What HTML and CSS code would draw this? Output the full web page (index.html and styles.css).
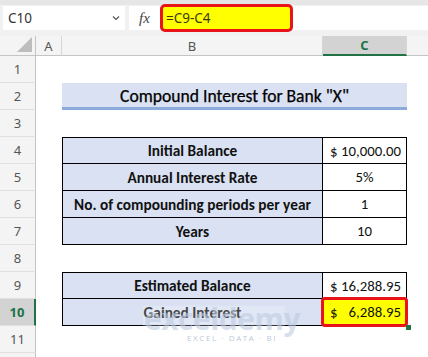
FILE: index.html
```html
<!DOCTYPE html>
<html>
<head>
<meta charset="utf-8">
<link rel="stylesheet" href="styles.css">
</head>
<body>
<div class="app">
  <div class="topbar">
    <div class="namebox">
      <span>C10</span>
      <svg class="chev" width="8" height="6" viewBox="0 0 8 6"><path d="M1 1.5 L4 4.5 L7 1.5" fill="none" stroke="#555" stroke-width="1.2"/></svg>
    </div>
    <div class="fxbox"><span class="fx">fx</span></div>
    <div class="formula"><div class="formula-hl">=C9-C4</div></div>
  </div>

  <div class="sheet">
    <div class="corner"><span class="tri"></span></div>
    <div class="ch">A</div>
    <div class="ch">B</div>
    <div class="ch ch-sel">C</div>
    <div class="ch ch-last"></div>

    <div class="rh">1</div><div class="c"></div><div class="c"></div><div class="c"></div><div class="c"></div>

    <div class="rh">2</div><div class="c"></div><div class="title">Compound Interest for Bank "X"</div><div class="c"></div>

    <div class="rh">3</div><div class="c"></div><div class="c"></div><div class="c"></div><div class="c"></div>

    <div class="rh">4</div><div class="c"></div><div class="tb first">Initial Balance</div><div class="tv first acct"><span>$</span><span>10,000.00</span></div><div class="c"></div>

    <div class="rh">5</div><div class="c"></div><div class="tb">Annual Interest Rate</div><div class="tv">5%</div><div class="c"></div>

    <div class="rh">6</div><div class="c"></div><div class="tb">No. of compounding periods per year</div><div class="tv">1</div><div class="c"></div>

    <div class="rh">7</div><div class="c"></div><div class="tb">Years</div><div class="tv">10</div><div class="c"></div>

    <div class="rh">8</div><div class="c"></div><div class="c"></div><div class="c"></div><div class="c"></div>

    <div class="rh">9</div><div class="c"></div><div class="tb first">Estimated Balance</div><div class="tv first acct"><span>$</span><span>16,288.95</span></div><div class="c"></div>

    <div class="rh rh-sel">10</div><div class="c"></div><div class="tb">Gained Interest</div><div class="tv acct active"><span>$</span><span>6,288.95</span></div><div class="c"></div>

    <div class="rh">11</div><div class="c"></div><div class="c"></div><div class="c"></div><div class="c"></div>

    <div class="rh"></div><div class="c"></div><div class="c"></div><div class="c"></div><div class="c"></div>
  </div>

  <div class="watermark">
    <div class="wm-top">
      <svg class="wm-logo" width="28" height="26" viewBox="0 0 28 26">
        <path d="M14 1 L26 7.5 L26 19 L14 25 L2 19 L2 7.5 Z" fill="#c9d3e6"/>
        <path d="M14 7 L20 10.5 L20 16.5 L14 20 L8 16.5 L8 10.5 Z" fill="#e9eef6"/>
        <path d="M14 1 L14 7 M2 7.5 L8 10.5" stroke="#e9eef6" stroke-width="1.5"/>
      </svg>
      <span class="wm-name">exceldemy</span>
    </div>
    <div class="wm-sub">EXCEL · DATA · BI</div>
  </div>
</div>
</body>
</html>
```

FILE: styles.css
```css
html, body {
  margin: 0;
  padding: 0;
  background: #ffffff;
}

.app {
  position: relative;
  width: 428px;
  height: 357px;
  overflow: hidden;
  font-family: Carlito, Lato, "Liberation Sans", sans-serif;
}

/* ---------- formula bar ---------- */
.topbar {
  height: 36px;
  box-sizing: border-box;
  background: #f1f1f1;
  border-top: 5px solid #e6e6e6;
  padding: 1px 0 0 3px;
  display: flex;
  align-items: flex-start;
  gap: 4px;
  font-family: "Noto Sans", "Open Sans", sans-serif;
}

.namebox {
  width: 122px;
  height: 24px;
  box-sizing: border-box;
  background: #ffffff;
  display: flex;
  align-items: center;
  justify-content: space-between;
  padding: 0 5px 0 5px;
  font-size: 13.5px;
  color: #333333;
}

.chev {
  display: block;
}

.fxbox {
  width: 31px;
  height: 24px;
  background: #ffffff;
  display: flex;
  align-items: center;
  justify-content: center;
}

.fx {
  font-family: "Liberation Serif", serif;
  font-style: italic;
  font-size: 15px;
  color: #444444;
}

.formula {
  flex: 1;
  height: 24px;
  background: #ffffff;
  margin-left: -4px;
}

.formula-hl {
  width: 133px;
  height: 28px;
  margin-top: -2px;
  box-sizing: border-box;
  background: #ffff00;
  border: 3px solid #e8141a;
  border-radius: 5px;
  padding-left: 3px;
  display: flex;
  align-items: center;
  font-size: 13.5px;
  color: #3a3a10;
}

/* ---------- sheet grid ---------- */
.sheet {
  display: grid;
  grid-template-columns: 36px 26px 261px 84px 1fr;
  grid-template-rows: 20px repeat(11, 27px) 10px;
}

.corner,
.ch {
  background: #f4f4f4;
  border-bottom: 1px solid #c4c4c4;
  border-right: 1px solid #d6d6d6;
  box-sizing: border-box;
}

.corner {
  position: relative;
  border-right: 1px solid #c4c4c4;
}

.tri {
  position: absolute;
  right: 3px;
  bottom: 3px;
  width: 0;
  height: 0;
  border-left: 15px solid transparent;
  border-bottom: 15px solid #bdbdbd;
}

.ch {
  display: flex;
  align-items: center;
  justify-content: center;
  font-family: "Noto Sans", "Open Sans", sans-serif;
  font-size: 13px;
  color: #555555;
}

.ch-sel {
  background: #d3d3d3;
  border-bottom: 2px solid #217346;
  color: #217346;
  font-weight: 700;
}

.ch-last {
  border-right: none;
}

.rh {
  background: #f4f4f4;
  border-right: 1px solid #c4c4c4;
  border-bottom: 1px solid #e0e0e0;
  box-sizing: border-box;
  display: flex;
  align-items: center;
  justify-content: center;
  font-family: "Noto Sans", "Open Sans", sans-serif;
  font-size: 13px;
  color: #555555;
}

.rh-sel {
  background: #d3d3d3;
  border-right: 2px solid #217346;
  color: #217346;
  font-weight: 700;
}

.c {
  background: #ffffff;
}

.title {
  grid-column: span 2;
  background: #d9e1f2;
  border-bottom: 3px solid #8eaadb;
  box-sizing: border-box;
  display: flex;
  align-items: center;
  justify-content: center;
  font-size: 17.6px;
  color: #000000;
  padding-top: 2px;
  -webkit-text-stroke: 0.25px #000000;
}

.tb,
.tv {
  box-sizing: border-box;
  border-right: 1px solid #000000;
  border-bottom: 1px solid #000000;
  display: flex;
  align-items: center;
  justify-content: center;
  font-size: 15.3px;
  color: #111111;
}

.tb {
  background: #d9e1f2;
  border-left: 1px solid #000000;
  font-weight: 700;
}

.tv {
  background: #ffffff;
  font-size: 14.8px;
}

.first {
  border-top: 1px solid #000000;
}

.acct {
  justify-content: space-between;
  padding: 0 5px 0 7px;
}

.active {
  position: relative;
  background: #ffff00;
}

.active::before {
  content: "";
  position: absolute;
  left: -2px;
  right: -2px;
  top: -2px;
  bottom: -2px;
  border: 3px solid #e8141a;
  border-radius: 4px;
}

.active::after {
  content: "";
  position: absolute;
  right: -5px;
  bottom: -5px;
  width: 5px;
  height: 5px;
  background: #217346;
}

/* ---------- watermark ---------- */
.watermark {
  position: absolute;
  left: 143px;
  top: 306px;
  width: 142px;
  height: 34px;
  background: rgba(255, 255, 255, 0.22);
}

.wm-top {
  display: flex;
  align-items: flex-end;
  gap: 1px;
  height: 26px;
}

.wm-logo {
  margin-bottom: -8px;
}

.wm-name {
  font-family: "Open Sans", sans-serif;
  font-weight: 700;
  font-size: 30px;
  line-height: 26px;
  color: rgba(190, 203, 226, 0.6);
  letter-spacing: -0.5px;
}

.wm-sub {
  margin-left: 44px;
  margin-top: 0;
  font-family: "Open Sans", sans-serif;
  font-size: 8px;
  letter-spacing: 1.6px;
  color: rgba(175, 188, 210, 0.85);
}
```
